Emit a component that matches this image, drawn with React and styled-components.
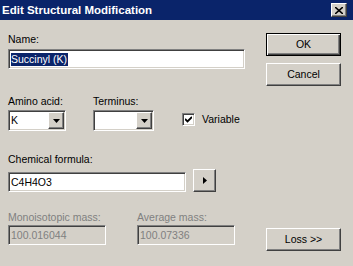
import styled, { createGlobalStyle, css } from "styled-components";

const GlobalStyle = createGlobalStyle`
  html, body {
    margin: 0;
    padding: 0;
    background: #d4d0c8;
  }
  * {
    box-sizing: border-box;
  }
`;

const sunken = css`
  border: 1px solid;
  border-color: #808080 #ffffff #ffffff #808080;
  box-shadow: inset 1px 1px 0 #404040, inset -1px -1px 0 #d4d0c8;
`;

const raised = css`
  border: 1px solid;
  border-color: #ffffff #404040 #404040 #ffffff;
  box-shadow: inset -1px -1px 0 #808080, inset 1px 1px 0 #d4d0c8;
`;

const Window = styled.div`
  width: 353px;
  height: 266px;
  background: #d4d0c8;
  display: flex;
  flex-direction: column;
  font-family: "Liberation Sans", Arial, sans-serif;
  font-size: 10.5px;
  color: #000;
  overflow: hidden;
`;

const TitleBar = styled.div`
  height: 20px;
  background: #0a246a;
  color: #fff;
  font-weight: bold;
  font-size: 11.5px;
  display: flex;
  align-items: center;
  justify-content: space-between;
  padding: 0 6px 0 2px;
`;

const CloseButton = styled.div`
  ${raised}
  width: 16px;
  height: 14px;
  background: #d4d0c8;
  display: flex;
  align-items: center;
  justify-content: center;
`;

const Body = styled.div`
  flex: 1;
  display: flex;
  padding: 13px 12px 15px 8px;
`;

const Form = styled.div`
  width: 250px;
  display: flex;
  flex-direction: column;
`;

const Side = styled.div`
  margin-left: auto;
  display: flex;
  flex-direction: column;
  gap: 7px;
`;

const Label = styled.div`
  line-height: 13px;
  height: 13px;
  white-space: nowrap;
  color: ${(p) => (p.$disabled ? "#808080" : "#000")};
  margin-bottom: ${(p) => p.$gap ?? 3}px;
`;

const TextBox = styled.div`
  ${sunken}
  width: ${(p) => p.$width}px;
  height: 20px;
  background: ${(p) => (p.$disabled ? "#d4d0c8" : "#fff")};
  color: ${(p) => (p.$disabled ? "#808080" : "#000")};
  display: flex;
  align-items: center;
  padding: 0 2px;
  white-space: nowrap;
  line-height: 13px;
`;

const Selected = styled.span`
  background: #0a246a;
  color: #fff;
  padding: 0 1px 0 0;
`;

const Row = styled.div`
  display: flex;
  align-items: ${(p) => p.$align ?? "flex-start"};
  gap: ${(p) => p.$gap ?? 0}px;
  margin-top: ${(p) => p.$top ?? 0}px;
`;

const Group = styled.div`
  display: flex;
  flex-direction: column;
  margin-top: ${(p) => p.$top ?? 0}px;
  margin-left: ${(p) => p.$left ?? 0}px;
`;

const Combo = styled.div`
  ${sunken}
  width: ${(p) => p.$width}px;
  height: 21px;
  background: #fff;
  display: flex;
  align-items: center;
  padding: 0 0 0 2px;
`;

const ComboValue = styled.div`
  flex: 1;
  line-height: 13px;
`;

const DropButton = styled.div`
  ${raised}
  width: 16px;
  height: 17px;
  margin-right: 1px;
  background: #d4d0c8;
  display: flex;
  align-items: center;
  justify-content: center;
`;

const CheckRow = styled.label`
  display: flex;
  align-items: center;
  gap: 7px;
  margin-top: 18px;
  margin-left: 28px;
  line-height: 13px;
`;

const CheckBox = styled.div`
  ${sunken}
  width: 13px;
  height: 13px;
  background: #fff;
  display: flex;
  align-items: center;
  justify-content: center;
`;

const Button = styled.div`
  ${raised}
  width: ${(p) => p.$width ?? 75}px;
  height: 23px;
  background: #d4d0c8;
  display: flex;
  align-items: center;
  justify-content: center;
  line-height: 13px;
  ${(p) =>
    p.$default &&
    css`
      border-color: #000;
      box-shadow: inset 1px 1px 0 #fff, inset -1px -1px 0 #404040,
        inset -2px -2px 0 #808080;
    `}
`;

const Spacer = styled.div`
  flex: 1;
`;

const DownArrow = () => (
  <svg width="7" height="4" viewBox="0 0 7 4">
    <path d="M0 0h7L3.5 4z" fill="#000" />
  </svg>
);

export default function App() {
  return (
    <Window>
      <GlobalStyle />
      <TitleBar>
        <span>Edit Structural Modification</span>
        <CloseButton>
          <svg width="8" height="7" viewBox="0 0 8 7">
            <path d="M0 0L8 7M8 0L0 7" stroke="#000" strokeWidth="1.6" />
          </svg>
        </CloseButton>
      </TitleBar>
      <Body>
        <Form>
          <Label>Name:</Label>
          <TextBox $width={237}>
            <Selected>Succinyl (K)</Selected>
          </TextBox>

          <Row $top={26}>
            <Group>
              <Label $gap={2}>Amino acid:</Label>
              <Combo $width={58}>
                <ComboValue>K</ComboValue>
                <DropButton>
                  <DownArrow />
                </DropButton>
              </Combo>
            </Group>
            <Group $left={27}>
              <Label $gap={2}>Terminus:</Label>
              <Combo $width={61}>
                <ComboValue />
                <DropButton>
                  <DownArrow />
                </DropButton>
              </Combo>
            </Group>
            <CheckRow>
              <CheckBox>
                <svg width="7" height="7" viewBox="0 0 7 7">
                  <path d="M0 3l2.5 2.5L7 1" stroke="#000" strokeWidth="1.8" fill="none" />
                </svg>
              </CheckBox>
              Variable
            </CheckRow>
          </Row>

          <Group $top={22}>
            <Label>Chemical formula:</Label>
            <Row $align="flex-end" $gap={7}>
              <TextBox $width={178}>C4H4O3</TextBox>
              <Button $width={23}>
                <svg width="4" height="7" viewBox="0 0 4 7">
                  <path d="M0 0v7l4-3.5z" fill="#000" />
                </svg>
              </Button>
            </Row>
          </Group>

          <Row $top={19} $gap={31}>
            <Group>
              <Label $disabled $gap={1}>Monoisotopic mass:</Label>
              <TextBox $width={98} $disabled>100.016044</TextBox>
            </Group>
            <Group>
              <Label $disabled $gap={1}>Average mass:</Label>
              <TextBox $width={98} $disabled>100.07336</TextBox>
            </Group>
          </Row>
        </Form>
        <Side>
          <Button $default>OK</Button>
          <Button>Cancel</Button>
          <Spacer />
          <Button>Loss &gt;&gt;</Button>
        </Side>
      </Body>
    </Window>
  );
}
